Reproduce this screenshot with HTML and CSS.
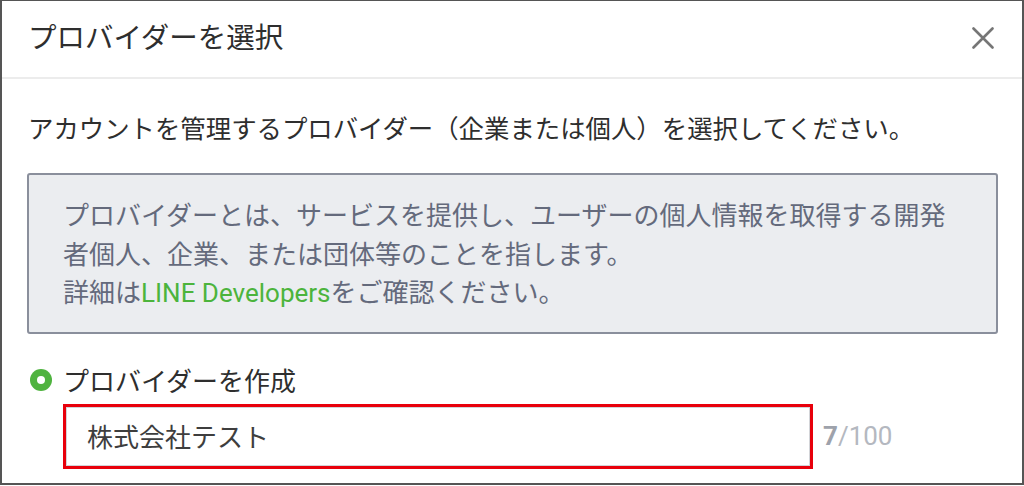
FILE: index.html
```html
<!DOCTYPE html>
<html lang="ja">
<head>
    <meta charset="UTF-8">
    <meta name="viewport" content="width=device-width, initial-scale=1.0">
    <title>プロバイダーを選択</title>
    <link rel="stylesheet" href="styles.css">
</head>
<body>
    <div class="modal">
        <header class="modal-header">
            <h1>プロバイダーを選択</h1>
            <button class="close" aria-label="閉じる">
                <svg width="22" height="22" viewBox="0 0 22 22">
                    <path d="M1.5 1.5 L20.5 20.5 M20.5 1.5 L1.5 20.5" stroke="#767676" stroke-width="2.6" stroke-linecap="round" fill="none"/>
                </svg>
            </button>
        </header>
        <main class="modal-body">
            <p class="lead">アカウントを管理するプロバイダー（企業または個人）を選択してください。</p>
            <div class="info">
                プロバイダーとは、サービスを提供し、ユーザーの個人情報を取得する開発<br>
                者個人、企業、または団体等のことを指します。<br>
                詳細は<a href="#" class="link">LINE Developers</a>をご確認ください。
            </div>
            <label class="option">
                <span class="radio"></span>
                <span>プロバイダーを作成</span>
            </label>
            <div class="field-row">
                <div class="field">
                    <input type="text" value="株式会社テスト">
                </div>
                <span class="count"><b>7</b>/100</span>
            </div>
        </main>
    </div>
</body>
</html>
```

FILE: styles.css
```css
* {
    margin: 0;
    padding: 0;
    box-sizing: border-box;
}

body {
    font-family: "Noto Sans CJK JP", "Noto Sans", sans-serif;
    background: #ffffff;
    color: #2e2e2e;
}

.modal {
    width: 1024px;
    height: 485px;
    border: 2px solid #555555;
    border-top-width: 1px;
    overflow: hidden;
    background: #ffffff;
}

.modal-header {
    display: flex;
    justify-content: space-between;
    align-items: center;
    height: 78px;
    padding: 0 28px 5px 26px;
    border-bottom: 2px solid #ececec;
}

.modal-header h1 {
    font-size: 28.5px;
    font-weight: normal;
    line-height: 1;
    color: #2e2e2e;
}

.close {
    display: flex;
    margin-top: 3px;
    background: none;
    border: none;
    cursor: pointer;
}

.modal-body {
    padding: 0 24px 0 26px;
}

.lead {
    margin-top: 30px;
    font-size: 25.4px;
    line-height: 36px;
    color: #2e2e2e;
}

.info {
    margin-top: 28px;
    margin-left: -1px;
    padding: 20px 20px 19px 34px;
    background: #ebedf0;
    border: 2px solid #8a8f9c;
    border-radius: 3px;
    font-size: 26px;
    line-height: 38.5px;
    color: #646a7c;
}

.link {
    font-family: Roboto, "Noto Sans", sans-serif;
    color: #4cb43c;
    text-decoration: none;
}

.option {
    display: flex;
    align-items: center;
    gap: 11px;
    margin-top: 28px;
    font-size: 26px;
    line-height: 36px;
    color: #2e2e2e;
}

.radio {
    width: 22px;
    height: 22px;
    margin-left: 2px;
    border-radius: 50%;
    background: #4fb33f;
    display: flex;
    justify-content: center;
    align-items: center;
}

.radio::after {
    content: "";
    width: 8px;
    height: 8px;
    border-radius: 50%;
    background: #ffffff;
}

.field-row {
    display: flex;
    align-items: center;
    gap: 10px;
    margin-top: 6px;
    margin-left: 35px;
}

.field {
    width: 750px;
    height: 65px;
    border: 3px solid #e8000b;
}

.field input {
    width: 100%;
    height: 100%;
    border: 1px solid #d2d4d8;
    padding: 0 0 2px 20px;
    font-family: "Noto Sans CJK JP", sans-serif;
    font-size: 26px;
    color: #3e3e3e;
    outline: none;
    background: #ffffff;
}

.count {
    font-family: Roboto, "Noto Sans", sans-serif;
    font-size: 26px;
    color: #b4b8c0;
}

.count b {
    color: #9ea2ab;
}
```
